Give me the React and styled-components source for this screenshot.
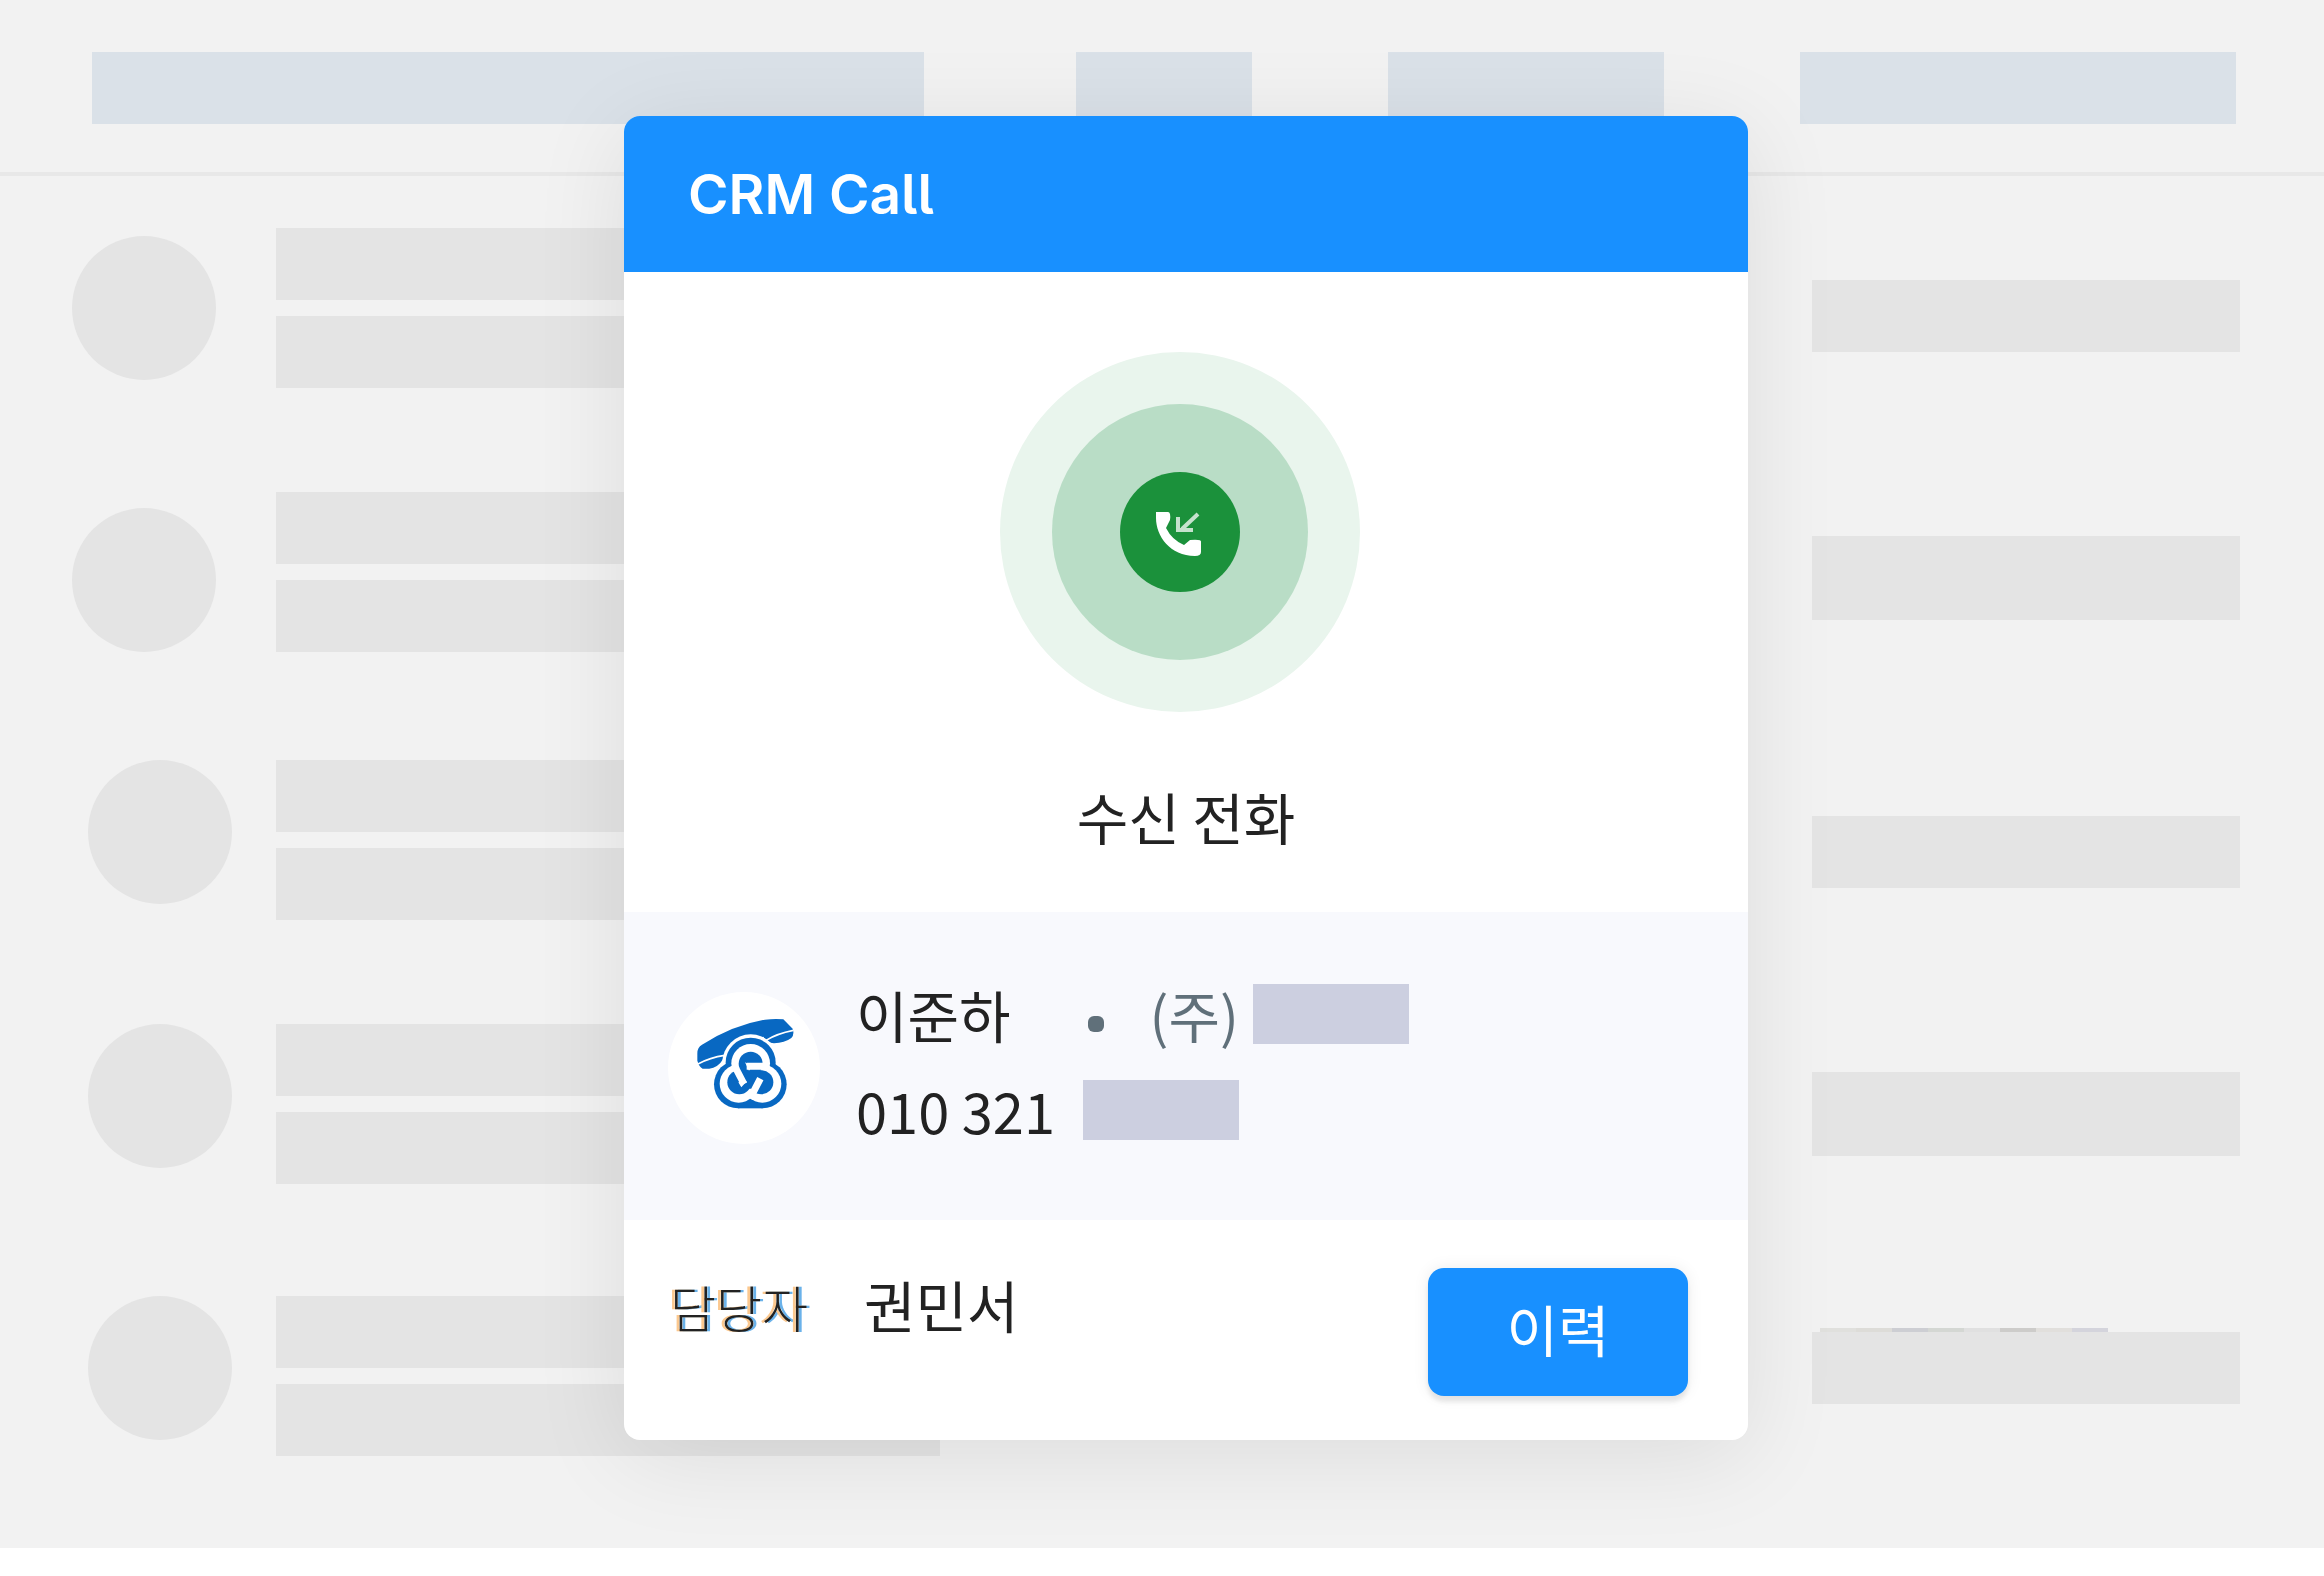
import styled, { createGlobalStyle } from 'styled-components';

const GlobalStyle = createGlobalStyle`
  * {
    box-sizing: border-box;
  }
  body {
    margin: 0;
    background: #fff;
    color: #222;
    font-family: "Noto Sans CJK KR", "Noto Sans", sans-serif;
  }
`;

const Page = styled.div`
  position: relative;
  overflow: hidden;
  min-height: 1548px;
  background: #f2f2f2;
`;

const Toolbar = styled.header`
  display: grid;
  grid-template-columns: 832fr 192fr 276fr 436fr;
  column-gap: 136px;
  height: 176px;
  padding: 52px 88px 48px 92px;
  border-bottom: 4px solid #e8e8e8;
`;

const ToolbarItem = styled.div`
  height: 72px;
  background: #dae1e8;
  margin-left: ${(props) => (props.$push ? '16px' : '0')};
`;

const Board = styled.main`
  display: flex;
  justify-content: space-between;
  padding: 0 84px 92px 72px;
`;

const List = styled.div`
  display: flex;
  flex-direction: column;
`;

const Person = styled.div`
  display: flex;
  justify-content: flex-end;
  align-items: center;
  gap: ${(props) => (props.$wide ? '60px' : '44px')};
  height: 160px;
  margin-top: ${(props) => props.$top};
`;

const Circle = styled.div`
  width: 144px;
  height: 144px;
  border-radius: 50%;
  background: #e4e4e4;
  align-self: ${(props) => props.$align};
`;

const Lines = styled.div`
  display: flex;
  flex-direction: column;
  gap: 16px;
`;

const Line = styled.div`
  width: 664px;
  height: 72px;
  background: #e4e4e4;
`;

const Status = styled.div`
  width: 428px;
  height: ${(props) => (props.$tall ? '84px' : '72px')};
  margin-top: ${(props) => props.$top};
  background: #e4e4e4;
`;

const Stripe = styled.div`
  display: flex;
  height: 4px;
  margin: 172px 0 0 8px;
`;

const Swatch = styled.span`
  width: 36px;
  background: ${(props) => props.$color};
`;

const Overlay = styled.div`
  position: absolute;
  inset: 0;
  display: flex;
  justify-content: center;
  align-items: flex-start;
  padding: 116px 0 0 48px;
`;

const Modal = styled.section`
  width: 1124px;
  max-width: 100%;
  border-radius: 16px;
  overflow: hidden;
  background: #fff;
  box-shadow: 0 16px 96px rgba(0, 0, 0, 0.09);
`;

const ModalHeader = styled.header`
  display: flex;
  align-items: center;
  height: 156px;
  padding: 0 64px;
  background: #1890ff;
`;

const Title = styled.h1`
  margin: 0;
  color: #fff;
  font-family: Inter, sans-serif;
  font-feature-settings: "cv05" 1;
  font-size: 55px;
  font-weight: 600;
  line-height: 64px;
`;

const Incoming = styled.div`
  display: flex;
  flex-direction: column;
  align-items: center;
  gap: 64px;
  height: 640px;
  padding-top: 80px;
`;

const Ring = styled.div`
  display: flex;
  justify-content: center;
  align-items: center;
  width: 360px;
  height: 360px;
  margin-right: 12px;
  border-radius: 50%;
  background: #e9f5ed;
`;

const InnerRing = styled(Ring)`
  width: 256px;
  height: 256px;
  margin: 0;
  background: #b9ddc6;
`;

const CallBadge = styled(InnerRing)`
  width: 120px;
  height: 120px;
  background: #1b913b;
`;

const Text = styled.span`
  color: ${(props) => (props.$muted ? '#60707a' : '#222')};
  font-size: 56px;
  line-height: 80px;
  white-space: nowrap;
`;

const Contact = styled.div`
  display: flex;
  gap: 36px;
  height: 308px;
  padding: 60px 44px 0;
  background: #f8f9fd;
`;

const Avatar = styled.div`
  width: 152px;
  height: 152px;
  margin-top: 20px;
  border-radius: 50%;
  background: #fff;
`;

const Details = styled.div`
  display: flex;
  flex-direction: column;
  gap: 12px;
`;

const DetailRow = styled.div`
  display: flex;
  align-items: center;
  height: 84px;
`;

const Dot = styled.span`
  width: 16px;
  height: 16px;
  margin: 20px 46px 0 77px;
  border-radius: 6px;
  background: #60707a;
`;

const Masked = styled.span`
  width: 156px;
  height: 60px;
  margin-left: ${(props) => props.$left};
  background: #cccfe0;
`;

const ModalFooter = styled.footer`
  display: flex;
  align-items: flex-start;
  height: 220px;
  padding: 44px 60px 0 46px;
`;

const Manager = styled.div`
  display: flex;
  align-items: baseline;
  gap: 56px;
`;

const ManagerLabel = styled(Text)`
  font-size: 50px;
  font-weight: 300;
  text-shadow: -3px 0 #fbc88f, 3px 0 #6ab2ea;
`;

const HistoryButton = styled.button`
  width: 260px;
  height: 128px;
  margin: 4px 0 0 auto;
  padding: 0 0 8px;
  border: 0;
  border-radius: 16px;
  background: #1890ff;
  color: #fff;
  font-family: inherit;
  font-size: 56px;
  line-height: 80px;
  box-shadow: 0 6px 4px rgba(0, 0, 0, 0.08), 0 0 16px rgba(0, 0, 0, 0.08);
  cursor: pointer;
`;

const people = [
  { top: '52px', align: 'center' },
  { top: '104px', align: 'flex-end' },
  { top: '108px', align: 'flex-start', near: true },
  { top: '104px', align: 'flex-start', near: true },
  { top: '112px', align: 'flex-start', near: true },
];

const stripeColors = ['#e0e0dd', '#dddcd8', '#cdced3', '#d4d7d3', '#e0e0e0', '#cdccca', '#e1dfdc', '#d4d4dc'];

function IncomingIcon() {
  return (
    <svg width="48" height="48" viewBox="2 -2 48 48" fill="none" aria-hidden="true">
      <path d="M2 2h12q3 0 2 8l-4 8q6 12 18 17l6-5q12-1 11 2v10q0 4-6 4C16 46 2 26 2 8Z" fill="#fff" />
      <path d="M44 4L28 19M24 7v13h15" stroke="#c5e2cd" strokeWidth="4" />
    </svg>
  );
}

// old handset over the three-lobed knot
function PhoneLogo() {
  return (
    <svg width="152" height="152" viewBox="54 66 456 456" fill="none" aria-hidden="true">
      <path
        d="M142 250Q142 232 156 224Q250 165 345 149Q375 145 400 148L428 176Q434 194 424 204Q404 219 372 220Q350 218 340 200L222 256Q216 284 190 293Q172 298 158 296Q147 290 142 272Z"
        fill="#0868c2"
      />
      <path d="M144 282Q180 262 224 256M348 211Q380 191 430 181" stroke="#fff" strokeWidth="5" />
      <circle cx="302" cy="278" r="85" fill="#fff" />
      <circle cx="264" cy="342" r="80" fill="#fff" />
      <g fill="#0868c2">
        <circle cx="302" cy="278" r="75" />
        <circle cx="264" cy="343" r="72" />
        <circle cx="338" cy="343" r="72" />
        <path d="M264 343h74v72h-74z" />
      </g>
      <g fill="#fff">
        <circle cx="302" cy="280" r="58" />
        <circle cx="266" cy="341" r="57" />
        <circle cx="337" cy="341" r="57" />
      </g>
      <g fill="#0868c2">
        <circle cx="302" cy="281" r="36" />
        <circle cx="268" cy="337" r="36" />
        <circle cx="334" cy="337" r="36" />
        <path d="M270 292L300 292L334 302L312 356L286 356L262 300Z" />
      </g>
      <path d="M257 294L282 342M356 289H290M300 386L331 326" stroke="#fff" strokeWidth="21" />
      <path d="M285 277L297 302L306 289ZM265 337L274 352L291 333Z" fill="#fff" />
    </svg>
  );
}

export default function App() {
  return (
    <>
      <GlobalStyle />
      <Page>
        <Toolbar>
          <ToolbarItem />
          <ToolbarItem $push />
          <ToolbarItem />
          <ToolbarItem />
        </Toolbar>
        <Board>
          <List>
            {people.map((person, i) => (
              <Person key={i} $top={person.top} $wide={!person.near}>
                <Circle $align={person.align} />
                <Lines>
                  <Line />
                  <Line />
                </Lines>
              </Person>
            ))}
          </List>
          <List>
            <Status $top="104px" />
            <Status $top="184px" $tall />
            <Status $top="196px" />
            <Status $top="184px" $tall />
            <Stripe>
              {stripeColors.map((color, i) => (
                <Swatch key={i} $color={color} />
              ))}
            </Stripe>
            <Status $top="0" />
          </List>
        </Board>
        <Overlay>
          <Modal>
            <ModalHeader>
              <Title>CRM Call</Title>
            </ModalHeader>
            <Incoming>
              <Ring>
                <InnerRing>
                  <CallBadge>
                    <IncomingIcon />
                  </CallBadge>
                </InnerRing>
              </Ring>
              <Text>수신 전화</Text>
            </Incoming>
            <Contact>
              <Avatar>
                <PhoneLogo />
              </Avatar>
              <Details>
                <DetailRow>
                  <Text>이준하</Text>
                  <Dot />
                  <Text $muted>(주)</Text>
                  <Masked $left="14px" />
                </DetailRow>
                <DetailRow>
                  <Text>010 321</Text>
                  <Masked $left="28px" />
                </DetailRow>
              </Details>
            </Contact>
            <ModalFooter>
              <Manager>
                <ManagerLabel>담당자</ManagerLabel>
                <Text>권민서</Text>
              </Manager>
              <HistoryButton type="button">이력</HistoryButton>
            </ModalFooter>
          </Modal>
        </Overlay>
      </Page>
    </>
  );
}
